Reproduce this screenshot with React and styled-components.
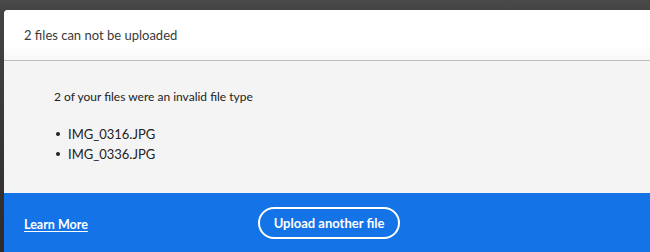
import React from 'react';
import styled, { createGlobalStyle } from 'styled-components';

const GlobalStyle = createGlobalStyle`
  html, body {
    margin: 0;
    padding: 0;
    background: #3a3a3a;
    overflow: hidden;
  }
  body {
    font-family: Lato, "Open Sans", "Liberation Sans", sans-serif;
  }
`;

const Backdrop = styled.div`
  width: 650px;
  height: 252px;
  background: linear-gradient(180deg, #4a4a4a 0px, #444 10px, #2e2a28 100%);
  padding: 10px 0 0 4px;
  box-sizing: border-box;
`;

const Dialog = styled.div`
  display: flex;
  flex-direction: column;
  height: 242px;
  background: #f4f4f4;
  border-top-left-radius: 4px;
  overflow: hidden;
`;

const Header = styled.div`
  height: 51px;
  flex: none;
  display: flex;
  align-items: center;
  padding-left: 20px;
  background: linear-gradient(180deg, #fff 70%, #f7f7f7 100%);
  border-bottom: 1px solid #bcbcbc;
  box-sizing: border-box;
  font-size: 13px;
  color: #3a3a3a;
`;

const Body = styled.div`
  flex: 1;
  padding: 28px 0 0 50px;
  color: #222;
  font-size: 12px;
`;

const Message = styled.p`
  margin: 0 0 20px;
`;

const FileList = styled.ul`
  margin: 0;
  padding: 0;
  list-style: none;
`;

const FileItem = styled.li`
  display: flex;
  align-items: center;
  height: 20px;
  font-size: 13px;

  &::before {
    content: '';
    width: 4px;
    height: 4px;
    border-radius: 50%;
    background: #222;
    margin: 0 8px 0 2px;
  }
`;

const Footer = styled.div`
  height: 59px;
  flex: none;
  background: #1473e6;
  display: flex;
  align-items: center;
  padding: 0 20px;
  color: #fff;
`;

const LearnLink = styled.a`
  color: #fff;
  font-size: 12.5px;
  font-weight: 700;
  text-decoration: underline;
  text-underline-offset: 2px;
  width: 234px;
  margin-top: 4px;
`;

const OutlineButton = styled.button`
  height: 32px;
  width: 142px;
  padding: 0;
  border: 2px solid #fff;
  border-radius: 16px;
  background: transparent;
  color: #fff;
  font-family: inherit;
  font-size: 13px;
  font-weight: 700;
  cursor: pointer;
`;

const files = ['IMG_0316.JPG', 'IMG_0336.JPG'];

export default function App() {
  return (
    <>
      <GlobalStyle />
      <Backdrop>
        <Dialog>
          <Header>2 files can not be uploaded</Header>
          <Body>
            <Message>2 of your files were an invalid file type</Message>
            <FileList>
              {files.map((f) => (
                <FileItem key={f}>{f}</FileItem>
              ))}
            </FileList>
          </Body>
          <Footer>
            <LearnLink href="#">Learn More</LearnLink>
            <OutlineButton>Upload another file</OutlineButton>
          </Footer>
        </Dialog>
      </Backdrop>
    </>
  );
}
